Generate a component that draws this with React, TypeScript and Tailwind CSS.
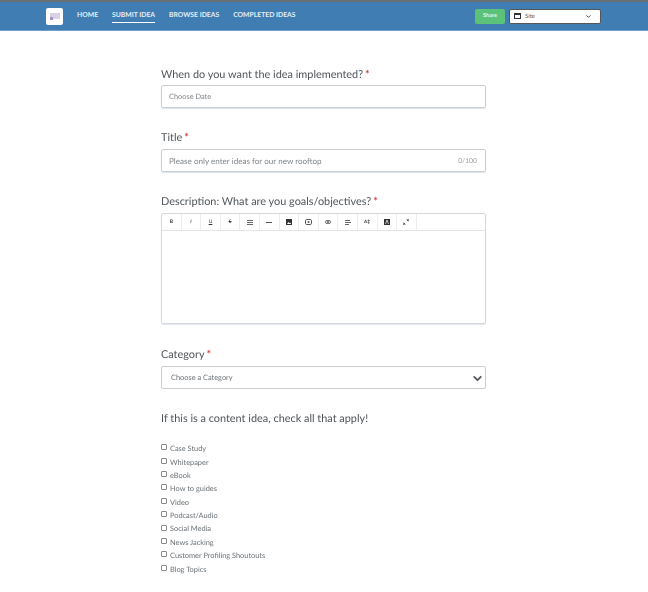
import { ChevronDown } from "lucide-react";

const nav = [
  { label: "HOME", active: false },
  { label: "SUBMIT IDEA", active: true },
  { label: "BROWSE IDEAS", active: false },
  { label: "COMPLETED IDEAS", active: false },
];

const checks = [
  "Case Study",
  "Whitepaper",
  "eBook",
  "How to guides",
  "Video",
  "Podcast/Audio",
  "Social Media",
  "News Jacking",
  "Customer Profiling Shoutouts",
  "Blog Topics",
];

function Label({ text }: { text: string }) {
  return (
    <div className="text-[10.9px] leading-[16px] text-[#4f555a]">
      {text}
      <span className="ml-[2px] font-bold text-[#d9453d]">*</span>
    </div>
  );
}

const tools = [
  <span className="text-[5px] font-bold">B</span>,
  <span className="text-[5px] italic">I</span>,
  <span className="text-[5px] underline">U</span>,
  <span className="text-[5px] line-through">S</span>,
  <svg width="6" height="5" viewBox="0 0 6 5"><path d="M0 .5h6M0 2.5h6M0 4.5h6" stroke="#666" strokeWidth="1" /></svg>,
  <div className="h-px w-[6px] bg-[#555]" />,
  <svg width="6" height="6" viewBox="0 0 6 6"><rect width="6" height="6" fill="#333" /><path d="M1 5l1.5-2L4 4.5 5 3.5V5z" fill="#fff" /></svg>,
  <svg width="7" height="6" viewBox="0 0 7 6"><rect x=".5" y=".5" width="6" height="5" rx="1.2" fill="none" stroke="#555" /><circle cx="3.5" cy="3" r="1" fill="#555" /></svg>,
  <svg width="6" height="4" viewBox="0 0 6 4"><rect x=".5" y=".5" width="3" height="3" rx="1.4" fill="none" stroke="#666" /><rect x="2.5" y=".5" width="3" height="3" rx="1.4" fill="none" stroke="#666" /></svg>,
  <svg width="6" height="5" viewBox="0 0 6 5"><path d="M0 .5h5M0 2.5h6M0 4.5h4" stroke="#666" strokeWidth="1" /></svg>,
  <span className="text-[4.5px] font-bold">A↕</span>,
  <svg width="6" height="6" viewBox="0 0 6 6"><rect width="6" height="6" fill="#333" /><path d="M1.5 5L3 1l1.5 4" fill="none" stroke="#fff" strokeWidth=".7" /></svg>,
  <svg width="6" height="6" viewBox="0 0 6 6"><path d="M.5 5.5l1.5-1.5M5.5 .5L4 2" stroke="#555" strokeWidth="1" /><path d="M3.5 .5h2v2M.5 3.5v2h2" fill="none" stroke="#555" strokeWidth=".6" /></svg>,
];

export default function App() {
  return (
    <div className="min-h-[592px] font-['Lato','Liberation_Sans',sans-serif] [text-rendering:geometricPrecision]">
      <header className="flex h-[31px] items-center border-t-2 border-b border-t-[#6a6f74] border-b-[#6f9fca] bg-[#3f7db3] pl-[46px] pr-[47px]">
        <div className="flex h-[17px] w-[17px] items-center justify-center rounded-[2px] bg-white">
          <div className="relative h-[6px] w-[10px] bg-[#d8d2e4]">
            <div className="absolute bottom-[-1px] left-0 h-[3px] w-[3px] bg-[#a98cc9]" />
          </div>
        </div>
        <nav className="ml-[14px] flex items-center gap-[14px]">
          {nav.map((n) => (
            <div
              key={n.label}
              className={`border-b pt-[2px] pb-[2px] text-[6.8px] font-bold leading-[9px] text-[#e6edf4] ${
                n.active ? "border-white" : "border-transparent"
              }`}
            >
              {n.label}
            </div>
          ))}
        </nav>
        <div className="ml-auto flex items-center gap-[4px]">
          <div className="flex h-[15px] w-[30px] items-center justify-center rounded-[2px] bg-[#5cc27a] text-[5.5px] font-bold text-[#e8f6ec]">
            Share
          </div>
          <div className="flex h-[15px] w-[92px] items-center rounded-[2px] border border-[#555] bg-white pl-[4px] pr-[8px] text-[6px] text-[#555]">
            <svg width="7" height="6" viewBox="0 0 7 6" className="mr-[4px]">
              <rect x=".5" y=".5" width="6" height="5" fill="none" stroke="#333" />
              <rect x=".5" y=".5" width="6" height="1.5" fill="#333" />
            </svg>
            <span>Site</span>
            <ChevronDown className="ml-auto" size={7} strokeWidth={3} color="#333" />
          </div>
        </div>
      </header>

      <main className="ml-[161px] w-[325px] pt-[36px] [will-change:transform]">
        <Label text="When do you want the idea implemented?" />
        <div className="mt-[2px] flex h-[23px] items-center rounded-[2px] border border-[#c9ced3] pl-[7px] pt-[1px] text-[7.4px] text-[#80868b] shadow-[0_1px_1px_#dde1e5]">
          Choose Date
        </div>

        <div className="mt-[22px]">
          <Label text="Title" />
        </div>
        <div className="mt-[3px] flex h-[23px] items-center justify-between rounded-[2px] border border-[#c9ced3] pl-[7px] pr-[8px] pt-[1px] text-[8.1px] text-[#80868b] shadow-[0_1px_1px_#dde1e5]">
          <span>Please only enter ideas for our new rooftop</span>
          <span className="text-[6.8px] text-[#9a9fa4]">0/100</span>
        </div>

        <div className="mt-[22px]">
          <Label text="Description: What are you goals/objectives?" />
        </div>
        <div className="mt-[3px] h-[111px] rounded-[2px] border border-[#d5d9dd] shadow-[0_1px_1px_#e3e6e9]">
          <div className="flex h-[17px] border-b border-[#e2e5e8]">
            {tools.map((t, i) => (
              <div
                key={i}
                className="flex h-full w-[19.6px] items-center justify-center border-r border-[#eceef0] leading-none text-[#333]"
              >
                {t}
              </div>
            ))}
          </div>
        </div>

        <div className="mt-[23px]">
          <Label text="Category" />
        </div>
        <div className="mt-[3px] flex h-[23px] items-center justify-between rounded-[2px] border border-[#c9ced3] pl-[9px] pr-[1px] pt-[1px] text-[7.4px] text-[#6b7176]">
          <span>Choose a Category</span>
          <ChevronDown size={13} strokeWidth={3.5} color="#555b60" />
        </div>

        <div className="mt-[22px] text-[10.9px] leading-[16px] text-[#4f555a]">
          If this is a content idea, check all that apply!
        </div>

        <div className="mt-[15px] flex flex-col">
          {checks.map((c) => (
            <div key={c} className="flex h-[13.4px] items-center text-[7.4px] text-[#6b7176]">
              <div className="mb-[3px] mr-[3px] h-[6px] w-[6px] rounded-[1px] border border-[#888]" />
              {c}
            </div>
          ))}
        </div>
      </main>
    </div>
  );
}
